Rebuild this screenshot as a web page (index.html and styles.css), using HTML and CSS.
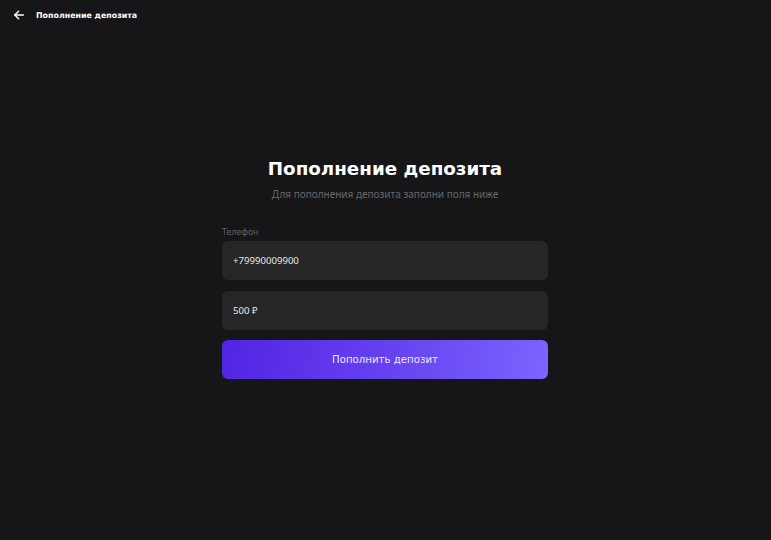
FILE: index.html
```html
<!DOCTYPE html>
<html lang="ru">
<head>
<meta charset="utf-8">
<title>Пополнение депозита</title>
<link rel="stylesheet" href="styles.css">
</head>
<body>
<header class="topbar">
  <button class="back" type="button" aria-label="Назад">
    <svg width="12" height="12" viewBox="0 0 12 12" fill="none" stroke="#fff" stroke-width="1.4" stroke-linecap="round" stroke-linejoin="round">
      <path d="M10.5 6H1.8"/>
      <path d="M5.6 2.2L1.8 6l3.8 3.8"/>
    </svg>
  </button>
  <span class="topbar-title">Пополнение депозита</span>
</header>
<main class="page">
  <section class="deposit">
    <h1 class="deposit-title">Пополнение депозита</h1>
    <p class="deposit-sub">Для пополнения депозита заполни поля ниже</p>
    <form class="deposit-form">
      <label class="field-label">Телефон</label>
      <div class="field">+79990009900</div>
      <div class="field field-gap">500 ₽</div>
      <button class="submit" type="button">Пополнить депозит</button>
    </form>
  </section>
</main>
</body>
</html>
```
FILE: styles.css
```css
* { box-sizing: border-box; }

html, body {
  margin: 0;
  height: 100%;
  background: #161618;
  color: #fff;
  font-family: "DejaVu Sans", "Noto Sans", sans-serif;
}

.topbar {
  display: flex;
  align-items: center;
  height: 30px;
  padding-left: 12px;
}

.back {
  display: flex;
  align-items: center;
  justify-content: center;
  width: 14px;
  height: 14px;
  padding: 0;
  border: 0;
  background: none;
  margin-right: 10px;
}

.topbar-title {
  font-size: 7.9px;
  font-weight: 700;
}

.page {
  display: flex;
  justify-content: center;
  padding-top: 125px;
}

.deposit {
  width: 326px;
  margin-right: 1px;
  display: flex;
  flex-direction: column;
}

.deposit-title {
  margin: 0;
  text-align: center;
  font-size: 18.3px;
  font-weight: 700;
  line-height: 28px;
}

.deposit-sub {
  margin: 4px 0 0;
  text-align: center;
  font-size: 10px;
  line-height: 14px;
  color: #66666b;
  font-family: "Noto Sans", sans-serif;
}

.deposit-form {
  display: flex;
  flex-direction: column;
  margin-top: 24px;
}

.field-label {
  font-family: "Noto Sans", sans-serif;
  font-size: 8.8px;
  line-height: 14px;
  color: #606065;
  margin-bottom: 2px;
}

.field {
  height: 39px;
  border-radius: 6px;
  background: #262628;
  display: flex;
  align-items: center;
  padding-left: 11px;
  font-family: "Noto Sans", sans-serif;
  font-size: 9.6px;
  color: #e6e6e8;
}

.field-gap { margin-top: 11px; }

.submit {
  margin-top: 10px;
  height: 39px;
  border: 0;
  border-radius: 6px;
  background: linear-gradient(100deg, #5224e4 0%, #6541ef 50%, #7c64ff 100%);
  color: #ece8ff;
  font-family: "DejaVu Sans", sans-serif;
  font-size: 10.2px;
}
```
